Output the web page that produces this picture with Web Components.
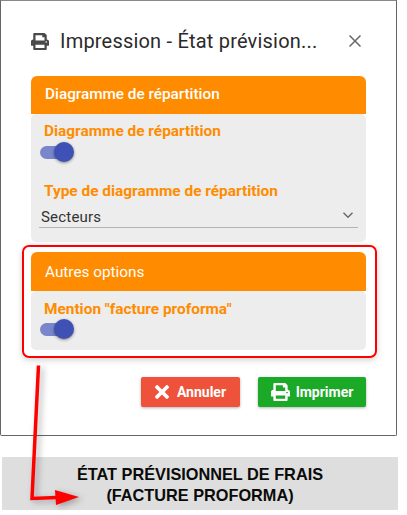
<!DOCTYPE html>
<html lang="fr">
<head>
<meta charset="utf-8">
<title>Impression</title>
<style>
	html, body { margin: 0; background: #fff; }
	body { width: 407px; height: 515px; position: relative; overflow: hidden; font-family: Roboto, sans-serif; }
</style>
</head>
<body>
<print-dialog heading="Impression - État prévisionnel de frais">
	<form-card heading="Diagramme de répartition">
		<toggle-field label="Diagramme de répartition"></toggle-field>
		<select-field label="Type de diagramme de répartition" value="Secteurs"></select-field>
	</form-card>
	<red-frame>
		<form-card heading="Autres options" compact>
			<toggle-field label='Mention "facture proforma"' style="--switch-gap: 1px"></toggle-field>
		</form-card>
	</red-frame>
	<action-button slot="actions" kind="cancel">Annuler</action-button>
	<action-button slot="actions" kind="print">Imprimer</action-button>
</print-dialog>
<caption-band>
	<div>ÉTAT PRÉVISIONNEL DE FRAIS</div>
	<div>(FACTURE PROFORMA)</div>
</caption-band>
<red-arrow></red-arrow>

<script>
const PRINTER = `<path d="M448 192V77.25c0-8.49-3.37-16.62-9.37-22.63L393.37 9.37c-6-6-14.14-9.37-22.63-9.37H96C78.33 0 64 14.33 64 32v160c-35.35 0-64 28.65-64 64v112c0 8.84 7.16 16 16 16h48v96c0 17.67 14.33 32 32 32h320c17.67 0 32-14.33 32-32v-96h48c8.84 0 16-7.16 16-16V256c0-35.35-28.65-64-64-64zm-64 256H128v-96h256v96zm0-224H128V64h192v48c0 8.84 7.16 16 16 16h48v96zm48 72c-13.25 0-24-10.75-24-24 0-13.26 10.75-24 24-24s24 10.74 24 24c0 13.25-10.75 24-24 24z"/>`;
const CROSS = `<path d="M242.72 256l100.07-100.07c12.28-12.28 12.28-32.19 0-44.48l-22.24-22.24c-12.28-12.28-32.19-12.28-44.48 0L176 189.28 75.93 89.21c-12.28-12.28-32.19-12.28-44.48 0L9.21 111.45c-12.28 12.28-12.28 32.19 0 44.48L109.28 256 9.21 356.07c-12.28 12.28-12.28 32.19 0 44.48l22.24 22.24c12.28 12.28 32.2 12.28 44.48 0L176 322.72l100.07 100.07c12.28 12.28 32.2 12.28 44.48 0l22.24-22.24c12.28-12.28 12.28-32.19 0-44.48L242.72 256z"/>`;

class PrintDialog extends HTMLElement {
	connectedCallback() {
		const shadow = this.attachShadow({ mode: "open" });
		shadow.innerHTML = `
			<style>
				:host { display: flex; flex-direction: column; box-sizing: border-box; width: 397px; height: 436px; border: 1px solid #666; border-top-color: #888; border-radius: 0 0 2px 2px; background: #fff; padding: 23px 30px 0; }
				header { display: flex; align-items: center; height: 34px; color: #333; }
				svg { width: 18px; height: 17px; fill: #4a4a4a; flex: none; margin-right: 11px; }
				h2 { margin: 0; font: 400 20px Roboto, sans-serif; color: #2b2b2b; flex: 1; letter-spacing: 0.2px; white-space: nowrap; }
				.close { width: 12px; height: 12px; stroke: #666; margin: 0 5px 0 0; fill: none; }
				main { display: flex; flex-direction: column; margin-top: 18px; }
				footer { display: flex; justify-content: flex-end; gap: 18px; margin-top: 19px; }
			</style>
			<header>
				<svg viewBox="0 0 512 512" preserveAspectRatio="none">${PRINTER}</svg>
				<h2>Impression - État prévision...</h2>
				<svg class="close" viewBox="0 0 12 12"><path d="M.5.5l11 11M11.500.5l-11 11" stroke-width="1.5"/></svg>
			</header>
			<main><slot></slot></main>
			<footer><slot name="actions"></slot></footer>
		`;
	}
}

class FormCard extends HTMLElement {
	connectedCallback() {
		const shadow = this.attachShadow({ mode: "open" });
		shadow.innerHTML = `
			<style>
				:host { display: block; }
				h3 { margin: 0; height: 38px; padding: 0 14px; background: #ff8c00; color: #fff; font: 500 15.3px/37px Roboto, sans-serif; border-radius: 6px 6px 0 0; }
				div { display: flex; flex-direction: column; gap: 21px; background: #ededed; border-radius: 5px; padding: 9px 8px 14px 13px; }
				:host([compact]) h3 { font-weight: 400; height: 39px; line-height: 40px; }
				:host([compact]) div { padding: 10px 8px 11px 13px; }
			</style>
			<h3>${this.getAttribute("heading")}</h3>
			<div><slot></slot></div>
		`;
	}
}

class ToggleField extends HTMLElement {
	connectedCallback() {
		const shadow = this.attachShadow({ mode: "open" });
		shadow.innerHTML = `
			<style>
				:host { display: block; }
				label { display: block; font: 700 15.4px/17px Roboto, sans-serif; color: #ff8c00; }
				.switch { display: flex; align-items: center; margin: var(--switch-gap, 2px) 0 0 -4px; width: 34px; height: 20px; }
				.track { display: block; position: relative; width: 30px; height: 13px; border-radius: 7px; background: #7986cb; }
				.thumb { position: absolute; left: 14px; top: -3.5px; width: 20px; height: 20px; border-radius: 50%; background: #3f51b5; box-shadow: 0 1px 3px rgba(0,0,0,.45); }
			</style>
			<label>${this.getAttribute("label").replace(/"/g, "&quot;")}</label>
			<span class="switch"><span class="track"><span class="thumb"></span></span></span>
		`;
	}
}

class SelectField extends HTMLElement {
	connectedCallback() {
		const shadow = this.attachShadow({ mode: "open" });
		shadow.innerHTML = `
			<style>
				:host { display: block; }
				label { display: block; font: 700 15.4px/17px Roboto, sans-serif; color: #ff8c00; }
				.box { display: flex; align-items: center; justify-content: space-between; box-sizing: border-box; margin: 5px 0 0 -5px; height: 23px; padding: 2px 5px 0 2px; border-bottom: 1px solid #b4b4b4; font: 400 15px Roboto, sans-serif; color: #333; letter-spacing: 0.2px; }
				svg { width: 10px; height: 6px; fill: none; stroke: #666; stroke-width: 1.4; margin-top: -4px; }
			</style>
			<label>${this.getAttribute("label")}</label>
			<div class="box"><span>${this.getAttribute("value")}</span><svg viewBox="0 0 10 6"><path d="M.5.7L5 5.2 9.500.7"/></svg></div>
		`;
	}
}

class RedFrame extends HTMLElement {
	connectedCallback() {
		const shadow = this.attachShadow({ mode: "open" });
		shadow.innerHTML = `
			<style>
				:host { display: block; margin: 3px -11px 0 -9px; padding: 5px 9px 6px 7px; border: 2px solid #f00; border-radius: 7px; box-shadow: 0 2px 6px rgba(0,0,0,.18); }
			</style>
			<slot></slot>
		`;
	}
}

class ActionButton extends HTMLElement {
	connectedCallback() {
		const shadow = this.attachShadow({ mode: "open" });
		const cancel = this.getAttribute("kind") === "cancel";
		shadow.innerHTML = `
			<style>
				:host { display: flex; align-items: center; justify-content: center; gap: ${cancel ? 8 : 6}px; box-sizing: border-box; height: 30px; border-radius: 2px; color: #fff; font: 700 14px Roboto, sans-serif; box-shadow: 0 1px 3px rgba(0,0,0,.3); background: ${cancel ? "#ee523a" : "#1ba928"}; width: ${cancel ? 99 : 108}px; }
				svg { fill: #fff; height: ${cancel ? 14 : 18}px; width: ${cancel ? 14 : 19}px; }
			</style>
			${cancel
				? `<svg viewBox="0 78 352 356" preserveAspectRatio="none">${CROSS}</svg>`
				: `<svg viewBox="0 0 512 512" preserveAspectRatio="none">${PRINTER}</svg>`}
			<slot></slot>
		`;
	}
}

class CaptionBand extends HTMLElement {
	connectedCallback() {
		const shadow = this.attachShadow({ mode: "open" });
		shadow.innerHTML = `
			<style>
				:host { display: block; box-sizing: border-box; width: 396px; height: 53px; margin: 21px 0 0 2px; padding-top: 7px; background: #dedede; color: #0a0a0a; text-align: center; font: 700 16.3px/21px "Liberation Sans", Arial, sans-serif; }
			</style>
			<slot></slot>
		`;
	}
}

// annotation drawn over the screenshot, free canvas
class RedArrow extends HTMLElement {
	connectedCallback() {
		const shadow = this.attachShadow({ mode: "open" });
		shadow.innerHTML = `
			<style>
				:host { position: absolute; left: 0; top: 0; width: 407px; height: 515px; pointer-events: none; }
				svg { display: block; filter: drop-shadow(3px 2px 3px rgba(0,0,0,.3)); }
			</style>
			<svg width="407" height="515" viewBox="0 0 407 515">
				<path d="M38.5 365.500L32 498.500L57 497.500" fill="none" stroke="#f00" stroke-width="3.500"/>
				<path d="M55 490L79 497L56 505Z" fill="#f00"/>
			</svg>
		`;
	}
}

customElements.define("print-dialog", PrintDialog);
customElements.define("form-card", FormCard);
customElements.define("toggle-field", ToggleField);
customElements.define("select-field", SelectField);
customElements.define("red-frame", RedFrame);
customElements.define("action-button", ActionButton);
customElements.define("caption-band", CaptionBand);
customElements.define("red-arrow", RedArrow);
</script>
</body>
</html>
